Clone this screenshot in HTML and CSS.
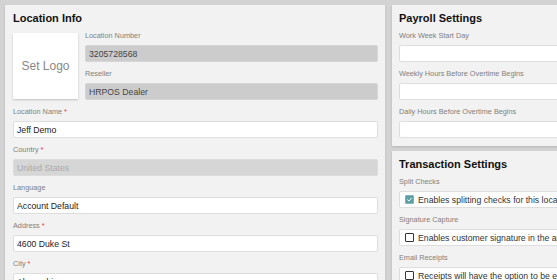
FILE: index.html
```html
<!DOCTYPE html>
<html lang="en">
<head>
    <meta charset="UTF-8">
    <meta name="viewport" content="width=device-width, initial-scale=1.0">
    <title>Location Settings</title>
    <link rel="stylesheet" href="styles.css">
</head>
<body>
    <!-- Linke Spalte: Standort -->
    <section class="panel panel-location">
        <h2 class="panel-title">Location Info</h2>
        <div class="top-row">
            <div class="logo-box">Set Logo</div>
            <div class="top-fields">
                <div class="field">
                    <div class="field-label">Location Number</div>
                    <input class="field-input locked" type="text" value="3205728568" readonly>
                </div>
                <div class="field">
                    <div class="field-label">Reseller</div>
                    <input class="field-input locked" type="text" value="HRPOS Dealer" readonly>
                </div>
            </div>
        </div>
        <div class="field">
            <div class="field-label">Location Name <span class="req">*</span></div>
            <input class="field-input" type="text" value="Jeff Demo">
        </div>
        <div class="field">
            <div class="field-label">Country <span class="req">*</span></div>
            <input class="field-input disabled" type="text" value="United States" disabled>
        </div>
        <div class="field">
            <div class="field-label">Language</div>
            <input class="field-input" type="text" value="Account Default">
        </div>
        <div class="field">
            <div class="field-label">Address <span class="req">*</span></div>
            <input class="field-input" type="text" value="4600 Duke St">
        </div>
        <div class="field">
            <div class="field-label">City <span class="req">*</span></div>
            <input class="field-input" type="text" value="Alexandria">
        </div>
    </section>

    <!-- Rechte Spalte: Einstellungen -->
    <div class="side-column">
        <section class="panel">
            <h2 class="panel-title">Payroll Settings</h2>
            <div class="field first">
                <div class="field-label">Work Week Start Day</div>
                <input class="field-input" type="text" value="">
            </div>
            <div class="field">
                <div class="field-label">Weekly Hours Before Overtime Begins</div>
                <input class="field-input" type="text" value="">
            </div>
            <div class="field">
                <div class="field-label">Daily Hours Before Overtime Begins</div>
                <input class="field-input" type="text" value="">
            </div>
        </section>

        <section class="panel">
            <h2 class="panel-title">Transaction Settings</h2>
            <div class="field first">
                <div class="field-label">Split Checks</div>
                <div class="check-row">
                    <span class="check-box checked">
                        <svg viewBox="0 0 10 10" width="9" height="9"><path d="M2 5.2 L4.2 7.3 L8 2.8" fill="none" stroke="#fff" stroke-width="1.4"/></svg>
                    </span>
                    <span class="check-text">Enables splitting checks for this location</span>
                </div>
            </div>
            <div class="field">
                <div class="field-label">Signature Capture</div>
                <div class="check-row">
                    <span class="check-box"></span>
                    <span class="check-text">Enables customer signature in the app</span>
                </div>
            </div>
            <div class="field">
                <div class="field-label">Email Receipts</div>
                <div class="check-row">
                    <span class="check-box"></span>
                    <span class="check-text">Receipts will have the option to be emailed</span>
                </div>
            </div>
        </section>
    </div>
</body>
</html>
```

FILE: styles.css
```css
/* Grunddesign */
body {
    font-family: "Liberation Sans", Arial, sans-serif;
    background-color: #d3d3d3;
    color: #222;
    margin: 0;
    padding: 5px;
    display: flex;
    align-items: flex-start;
    gap: 7px;
    overflow: hidden;
    height: 280px;
    box-sizing: border-box;
}

/* Panels */
.panel {
    background-color: #f2f2f2;
    box-shadow: 0 1px 2px rgba(0, 0, 0, 0.15);
    padding: 4px 7px 8px 8px;
    box-sizing: border-box;
}

.panel-location {
    width: 380px;
    flex-shrink: 0;
    min-height: 300px;
}

.side-column {
    width: 380px;
    flex-shrink: 0;
    display: flex;
    flex-direction: column;
    gap: 5px;
}

.side-column .panel {
    padding-left: 7px;
}

.panel-title {
    margin: 0 0 3px 0;
    font-size: 11px;
    line-height: 18px;
    font-weight: bold;
    color: #111;
}

/* Logo + Felder oben */
.top-row {
    display: flex;
    gap: 7px;
    margin-bottom: 1px;
}

.logo-box {
    width: 65px;
    height: 66px;
    margin-top: 3px;
    flex-shrink: 0;
    background-color: #fff;
    box-shadow: 0 1px 2px rgba(0, 0, 0, 0.2);
    color: #888;
    font-size: 12px;
    display: flex;
    align-items: center;
    justify-content: center;
}

.top-fields {
    flex: 1;
}

/* Felder */
.field {
    margin-top: 6px;
}

.top-fields .field:first-child,
.field.first {
    margin-top: 0;
}

.field-label {
    font-size: 7.3px;
    line-height: 11px;
    color: #808080;
    margin-bottom: 4px;
}

.req {
    color: #e53935;
}

.field-input {
    display: block;
    width: 100%;
    height: 17px;
    box-sizing: border-box;
    margin: 0;
    padding: 0 3px;
    font-family: "Liberation Sans", Arial, sans-serif;
    font-size: 8.7px;
    color: #222;
    background-color: #fff;
    border: 1px solid #dedede;
    border-radius: 2px;
    outline: none;
}

.field-input.locked {
    background-color: #cccccc;
    border-color: #d6d6d6;
    color: #444;
}

.field-input.disabled {
    background-color: #d6d6d6;
    border-color: #dcdcdc;
    color: #aaa;
}

/* Checkboxen */
.check-row {
    height: 17px;
    box-sizing: border-box;
    background-color: #fff;
    border: 1px solid #dedede;
    border-radius: 2px;
    display: flex;
    align-items: center;
    gap: 4px;
    padding-left: 5px;
    overflow: hidden;
    white-space: nowrap;
}

.check-box {
    width: 9px;
    height: 9px;
    box-sizing: border-box;
    border: 1px solid #333;
    border-radius: 1px;
    flex-shrink: 0;
    display: flex;
    align-items: center;
    justify-content: center;
}

.check-box.checked {
    background-color: #5d9ea5;
    border-color: #7fb3b9;
}

.check-box svg {
    display: block;
}

.check-text {
    font-size: 8.7px;
    color: #333;
}
```
